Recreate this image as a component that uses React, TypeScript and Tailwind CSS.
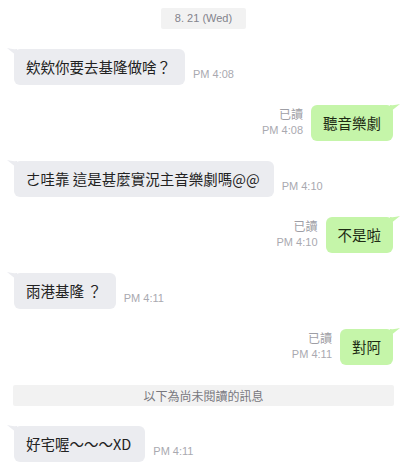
import React from "react";

type Msg =
  | { kind: "in"; text: React.ReactNode; time: string }
  | { kind: "out"; text: string; time: string }
  | { kind: "unread" };

const font = { fontFamily: '"Noto Sans CJK TC", "Liberation Sans", sans-serif' };

const messages: Msg[] = [
  { kind: "in", text: "欸欸你要去基隆做啥？", time: "PM 4:08" },
  { kind: "out", text: "聽音樂劇", time: "PM 4:08" },
  { kind: "in", text: "ㄜ哇靠 這是甚麼實況主音樂劇嗎@@", time: "PM 4:10" },
  { kind: "out", text: "不是啦", time: "PM 4:10" },
  { kind: "in", text: "雨港基隆 ？", time: "PM 4:11" },
  { kind: "out", text: "對阿", time: "PM 4:11" },
  { kind: "unread" },
  { kind: "in", text: "好宅喔～～～XD", time: "PM 4:11" },
];

function LeftTail() {
  return (
    <svg className="absolute -left-[7px] -top-[1px]" width="10" height="8" viewBox="0 0 10 8">
      <path d="M0 0 Q5 1.5 10 1 L10 8 Q5 4 0 0 Z" fill="#ebecf0" />
    </svg>
  );
}

function RightTail() {
  return (
    <svg className="absolute -right-[7px] -top-[1px]" width="10" height="8" viewBox="0 0 10 8">
      <path d="M10 0 Q5 1.5 0 1 L0 8 Q5 4 10 0 Z" fill="#c5f5a9" />
    </svg>
  );
}

function Incoming({ text, time }: { text: React.ReactNode; time: string }) {
  return (
    <div className="flex items-end gap-2 ml-[7px]">
      <div className="relative h-9 flex items-center pl-3 pr-[14px] rounded-[6px] bg-[#ebecf0] text-[14.5px] text-[#222] whitespace-nowrap">
        <LeftTail />
        {text}
      </div>
      <span className="mb-[3px] text-[11px] leading-4 text-[#a9a9b0] font-['Liberation_Sans',sans-serif]">
        {time}
      </span>
    </div>
  );
}

function Outgoing({ text, time }: { text: string; time: string }) {
  return (
    <div className="flex items-end justify-end gap-2 mr-[7px]">
      <div className="flex flex-col items-end mb-[3px] text-[11px] leading-4">
        <span className="text-[#9e9ea5] text-[12px]">已讀</span>
        <span className="text-[#a9a9b0] font-['Liberation_Sans',sans-serif]">{time}</span>
      </div>
      <div className="relative h-9 flex items-center px-3 rounded-[6px] bg-[#c5f5a9] text-[14.5px] text-[#1d2a14] whitespace-nowrap">
        <RightTail />
        {text}
      </div>
    </div>
  );
}

export default function App() {
  return (
    <div className="w-[402px] h-[468px] bg-white overflow-hidden pl-[7px] pr-[2px] pt-2" style={font}>
      <div className="flex flex-col gap-5">
        <div className="flex justify-center">
          <div className="w-[85px] h-[21px] flex items-center justify-center bg-[#f2f2f2] rounded-[2px] text-[11px] text-[#83838c] font-['Liberation_Sans',sans-serif]">
            8. 21 (Wed)
          </div>
        </div>
        {messages.map((m, i) =>
          m.kind === "in" ? (
            <Incoming key={i} text={m.text} time={m.time} />
          ) : m.kind === "out" ? (
            <Outgoing key={i} text={m.text} time={m.time} />
          ) : (
            <div
              key={i}
              className="mx-[6px] h-[21px] flex items-center justify-center bg-[#f2f2f2] rounded-[2px] text-[12px] text-[#77777d]"
            >
              以下為尚未閱讀的訊息
            </div>
          )
        )}
      </div>
    </div>
  );
}
